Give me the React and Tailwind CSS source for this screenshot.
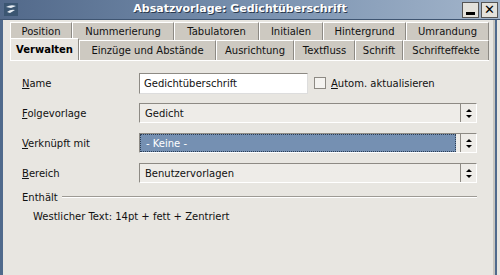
import React from 'react';

const font = { fontFamily: '"DejaVu Sans", "Liberation Sans", sans-serif' };

const Tab = ({ children, w }) => (
    <div className={`${w} h-full flex items-center justify-center bg-[#cdc9c1] border border-[#fff] border-r-[#8d8a84] border-b-0 text-[10px] text-[#111]`}>
        {children}
    </div>
);

const Spin = () => (
    <div className="w-[16px] h-full flex flex-col items-center justify-center border-l border-[#8d8a84] gap-[3px]">
        <div className="w-0 h-0 border-x-[3px] border-x-transparent border-b-[3px] border-b-black"></div>
        <div className="w-0 h-0 border-x-[3px] border-x-transparent border-t-[3px] border-t-black"></div>
    </div>
);

const Row = ({ label, u, children }) => (
    <div className="flex items-center h-[20px]">
        <div className="w-[117px] text-[10px] text-[#111]"><span className="underline">{u}</span>{label}</div>
        {children}
    </div>
);

const Select = ({ value, active }) => (
    <div className="w-[338px] h-[20px] flex items-center border border-[#8d8a84] border-r-[#fff] border-b-[#fff] bg-[#eeece8]">
        <div className={`flex-1 h-full flex items-center pl-[5px] text-[10px] ${active ? 'bg-[#7590b2] text-white border border-dotted border-[#2b3e55]' : 'text-[#111]'}`}>{value}</div>
        <div className="w-[4px]"></div>
        <Spin />
    </div>
);

export default function App() {
    return (
        <div style={font} className="w-[500px] h-[275px] flex flex-col bg-[#dcdad5] overflow-hidden">
            <div className="h-[20px] flex items-center bg-gradient-to-r from-[#52698a] via-[#7890ae] to-[#a3b5cb] border-b border-[#3f5572] pl-[4px] pr-[2px]">
                <svg width="14" height="13" viewBox="0 0 14 13">
                    <rect x="0" y="0" width="14" height="13" fill="#3b5672" />
                    <path d="M2 4 Q7 1 12 3 L7 5 Z" fill="#e8eef4" />
                    <path d="M3 9 Q7 6 11 7 L6 10 Z" fill="#e8eef4" />
                </svg>
                <div className="flex-1 text-center text-[11px] font-bold text-white [text-shadow:1px_1px_0_#2b3a4e]">Absatzvorlage: Gedichtüberschrift</div>
                <div className="flex gap-[2px]">
                    <div className="w-[17px] h-[16px] bg-[#e4e2dc] border border-[#555] flex items-end justify-center pb-[2px]">
                        <div className="w-[9px] h-[3px] bg-black"></div>
                    </div>
                    <div className="w-[17px] h-[16px] bg-[#e4e2dc] border border-[#555] flex items-center justify-center text-[13px] font-bold leading-none text-black">✕</div>
                </div>
            </div>
            <div className="flex-1 flex border-l-[3px] border-[#506a8c]">
                <div className="flex-1 flex flex-col bg-[#e8e6e1] pl-[7px] pr-[4px]">
                    <div className="h-[18px] mt-[2px] flex">
                        <Tab w="w-[62px]">Position</Tab>
                        <Tab w="w-[102px]">Nummerierung</Tab>
                        <Tab w="w-[85px]">Tabulatoren</Tab>
                        <Tab w="w-[64px]">Initialen</Tab>
                        <Tab w="w-[83px]">Hintergrund</Tab>
                        <Tab w="w-[83px]">Umrandung</Tab>
                    </div>
                    <div className="h-[20px] flex items-end">
                        <div className="w-[69px] h-[22px] -mt-[2px] flex items-center justify-center bg-[#e8e6e1] border border-[#fff] border-r-[#8d8a84] border-b-0 text-[10px] font-bold text-black relative z-10">Verwalten</div>
                        <Tab w="w-[137px]">Einzüge und Abstände</Tab>
                        <Tab w="w-[78px]">Ausrichtung</Tab>
                        <Tab w="w-[61px]">Textfluss</Tab>
                        <Tab w="w-[48px]">Schrift</Tab>
                        <Tab w="w-[86px]">Schrifteffekte</Tab>
                    </div>
                    <div className="flex-1 w-[479px] border-t border-[#fff] bg-[#e8e6e1] pl-[12px] pt-[12px] flex flex-col">
                        <div className="flex flex-col gap-[10px]">
                            <Row u="N" label="ame">
                                <div className="w-[169px] h-[21px] bg-white border border-[#8d8a84] border-r-[#ddd] border-b-[#ddd] flex items-center pl-[4px] text-[10px] text-[#111]">Gedichtüberschrift</div>
                                <div className="ml-[6px] w-[12px] h-[12px] border border-[#8d8a84] bg-[#f4f3f0]"></div>
                                <div className="ml-[5px] text-[10px] text-[#111]"><span className="underline">A</span>utom. aktualisieren</div>
                            </Row>
                            <Row u="F" label="olgevorlage"><Select value="Gedicht" /></Row>
                            <Row u="V" label="erknüpft mit"><Select value="- Keine -" active /></Row>
                            <Row u="B" label="ereich"><Select value="Benutzervorlagen" /></Row>
                        </div>
                        <div className="flex items-center mt-[5px] h-[18px] pr-[12px]">
                            <span className="text-[10px] text-[#111]">Enthält</span>
                            <div className="ml-[4px] flex-1 border-t border-[#9d9a94] border-b border-b-white"></div>
                        </div>
                        <div className="pl-[11px] mt-[3px] text-[10px] text-[#111]">Westlicher Text: 14pt + fett + Zentriert</div>
                    </div>
                </div>
                <div className="w-[7px] flex">
                    <div className="w-[2px] bg-[#c8c6c0]"></div>
                    <div className="w-[2px] bg-[#506a8c]"></div>
                    <div className="flex-1 bg-[#e8e6e1]"></div>
                </div>
            </div>
        </div>
    );
}
